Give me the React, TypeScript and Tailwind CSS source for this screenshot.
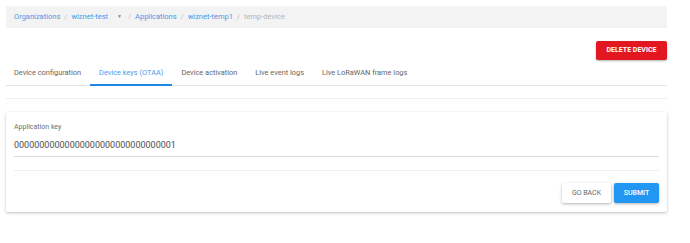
import { useState } from "react";

const tabs = [
  "Device configuration",
  "Device keys (OTAA)",
  "Device activation",
  "Live event logs",
  "Live LoRaWAN frame logs",
];

const Sep = () => <span className="mx-[4px] text-[#c4c4c4]">/</span>;

export default function App() {
  const [active, setActive] = useState(1);

  return (
    <div className="w-[690px] h-[243px] bg-white px-[6px] pt-[6px] font-['Roboto',sans-serif] text-[#333]">
      {/* Breadcrumb */}
      <div className="w-[661px] h-[22px] bg-[#f3f3f3] flex items-center px-[8px] text-[7.5px]">
        <span className="text-[#4a97e8]">Organizations</span>
        <Sep />
        <span className="text-[#4a97e8]">wiznet-test</span>
        <span className="ml-[9px] mr-[2px] text-[#888] text-[5px]">▼</span>
        <Sep />
        <span className="text-[#4a97e8]">Applications</span>
        <Sep />
        <span className="text-[#4a97e8]">wiznet-temp1</span>
        <Sep />
        <span className="text-[#b5b5b5]">temp-device</span>
      </div>

      {/* Actions */}
      <div className="w-[661px] flex justify-end mt-[13px]">
        <button className="w-[71px] h-[19px] bg-[#e3171f] text-white text-[7px] font-bold rounded-[2px] shadow-[0_1px_2px_rgba(0,0,0,0.3)]">
          DELETE DEVICE
        </button>
      </div>

      {/* Tabs */}
      <div className="w-[661px] flex border-b border-[#e4e4e4] mt-[2px] h-[24px]">
        {tabs.map((t, i) => (
          <button
            key={t}
            onClick={() => setActive(i)}
            className={`px-[9px] h-[24px] text-[7.4px] border-b-2 first:ml-[-1px] ${
              active === i
                ? "text-[#4a9cf0] border-[#1f88e5]"
                : "text-[#666] border-transparent"
            }`}
          >
            {t}
          </button>
        ))}
      </div>

      <div className="w-[661px] h-[13px] border-b border-[#eeeeee]" />

      {/* Card */}
      <div className="w-[661px] mt-[13px] bg-white rounded-[2px] shadow-[0_1px_3px_rgba(0,0,0,0.25)] px-[8px] pt-[10px] pb-[9px]">
        <div className="text-[7px] text-[#707070] leading-[10px]">Application key</div>
        <div className="mt-[7px] text-[9px] leading-[13px] text-[#505050] pb-[4px] border-b border-[#dcdcdc]">
          00000000000000000000000000000001
        </div>
        <div className="mt-[13px] border-t border-[#eeeeee]" />
        <div className="flex justify-end gap-[3px] mt-[12px]">
          <button className="w-[49px] h-[20px] bg-white text-[#666] text-[7px] rounded-[2px] shadow-[0_1px_3px_rgba(0,0,0,0.3)]">
            GO BACK
          </button>
          <button className="w-[45px] h-[20px] bg-[#2196f3] text-white text-[7px] font-medium rounded-[2px] shadow-[0_1px_3px_rgba(0,0,0,0.3)]">
            SUBMIT
          </button>
        </div>
      </div>
    </div>
  );
}
